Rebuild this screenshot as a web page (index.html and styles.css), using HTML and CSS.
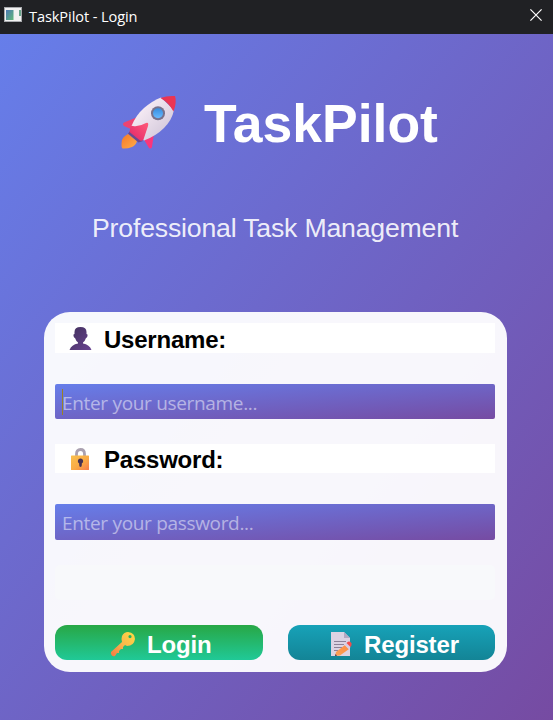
FILE: index.html
```html
<!DOCTYPE html>
<html lang="en">
<head>
<meta charset="utf-8">
<title>TaskPilot - Login</title>
<link rel="stylesheet" href="styles.css">
</head>
<body>
<header class="titlebar">
  <svg class="app-icon" width="18" height="15" viewBox="0 0 18 15">
    <defs><linearGradient id="app" x1="0" y1="0" x2="1" y2="1"><stop offset="0" stop-color="#4d79b5"/><stop offset="1" stop-color="#5fb878"/></linearGradient></defs>
    <rect width="18" height="15" fill="#f2f2f2"/><path d="M0 .5h18M.5 0v15M17.5 0v15M0 14.5h18" stroke="#a8aaad"/>
    <rect x="2" y="3" width="7.5" height="10" fill="url(#app)"/><rect x="15" y="3" width="2" height="6" fill="#69a58c"/>
  </svg>
  <span class="window-title">TaskPilot - Login</span>
  <svg class="close" width="12" height="12" viewBox="0 0 12 12"><path d="M.4.4l11.2 11.2M11.6.4L.4 11.6" stroke="#fff" stroke-width="1.2"/></svg>
</header>
<main class="window">
  <h1 class="brand">
    <svg class="rocket" width="56" height="56" viewBox="0 0 56 56">
      <defs>
        <linearGradient id="body" x1="0" y1="0" x2="1" y2="1"><stop offset="0.25" stop-color="#f5eaf3"/><stop offset="1" stop-color="#c9bfd4"/></linearGradient>
        <linearGradient id="fin" x1="0" y1="0" x2="1" y2="1"><stop offset="0" stop-color="#e9486e"/><stop offset="1" stop-color="#ff327d"/></linearGradient>
        <linearGradient id="cone" x1="1" y1="0" x2="0" y2="1"><stop offset="0" stop-color="#ff5a78"/><stop offset="1" stop-color="#e0246a"/></linearGradient>
        <linearGradient id="flame" x1="0" y1="0" x2="1" y2="1"><stop offset="0" stop-color="#f57829"/><stop offset="1" stop-color="#ffad48"/></linearGradient>
        <linearGradient id="glass" x1="0" y1="0" x2="0" y2="1"><stop offset="0" stop-color="#368ddf"/><stop offset="1" stop-color="#68b9ff"/></linearGradient>
      </defs>
      <path d="M7 39Q1 42 .7 47Q0 52 1.500 53.500Q6 54 11 52Q15 50 16 46Z" fill="url(#flame)"/>
      <path d="M19 21L3 27.500Q1 29 3 31L12 35L22 43L28 53Q30 54.500 31 52L33 38Z" fill="url(#fin)"/>
      <path d="M10.500 31Q15 20 23 13Q32 5.500 40 2.500L53 15Q51 25 43 33Q35 41 23 45.500Z" fill="url(#body)"/>
      <path d="M39.500 3Q46 .5 54 1Q56 7 52.500 16.500Q48 8 39.500 3Z" fill="#ea3452"/>
      <path d="M7 38.500L17.500 47.500L22 46L10 35Z" fill="#68498f"/>
      <path d="M9.500 32Q10 30 12 31Q18 32 25 28Q28 27 27 31L22.500 44.500Q21 46.500 19 45.500L8.500 37Z" fill="url(#cone)"/>
      <circle cx="37" cy="18.300" r="7" fill="#77728d"/><circle cx="37" cy="18.300" r="5" fill="url(#glass)"/>
    </svg>
    <span>TaskPilot</span>
  </h1>
  <p class="tagline">Professional Task Management</p>
  <form class="card">
    <label class="label" for="user">
      <svg class="label-icon" width="24" height="24" viewBox="0 0 24 24">
        <defs><linearGradient id="person" x1="0" y1="0" x2="1" y2="1"><stop offset="0" stop-color="#41305c"/><stop offset="1" stop-color="#694391"/></linearGradient></defs>
        <path d="M6.500 6Q6.500 1 12.500 1T18.500 6V8Q20 8 19.500 10Q19 12 18 12Q17 15 15 16.500V17.500Q21.500 18.500 23.500 24H1.500Q3.500 18.500 10 17.500V16.500Q8 15 7 12Q6 12 5.500 10Q5 8 6.500 8Z" fill="url(#person)"/>
      </svg><span>Username:</span>
    </label>
    <div class="field"><i class="caret"></i><input id="user" class="input" type="text" placeholder="Enter your username..."></div>
    <label class="label label-second" for="pass">
      <svg class="label-icon" width="24" height="24" viewBox="0 0 24 24">
        <defs><linearGradient id="lock" x1="0" y1="0" x2="1" y2="1"><stop offset="0" stop-color="#fac14d"/><stop offset=".55" stop-color="#f9aa45"/><stop offset="1" stop-color="#f77b4a"/></linearGradient></defs>
        <path d="M8.500 12V7Q8.500 2.500 12.500 2.500T16.500 7V12" fill="none" stroke="#aaa1b0" stroke-width="2.800"/>
        <rect x="3" y="8.500" width="18" height="14.500" rx=".6" fill="url(#lock)"/><path d="M12.500 11.500a2.600 2.600 0 0 0-1.300 4.900V18q0 2 1.300 2t1.300-2v-1.600A2.600 2.600 0 0 0 12.500 11.500Z" fill="#453052"/>
      </svg><span>Password:</span>
    </label>
    <div class="field field-second"><input id="pass" class="input" type="password" placeholder="Enter your password..."></div>
    <div class="message"></div>
    <div class="actions">
      <button class="button login" type="button">
        <svg width="26" height="26" viewBox="0 0 26 26">
          <defs><linearGradient id="key" x1="1" y1="0" x2="0" y2="1"><stop offset="0" stop-color="#ffdc43"/><stop offset=".5" stop-color="#f9b84c"/><stop offset="1" stop-color="#f47842"/></linearGradient></defs>
          <path fill-rule="evenodd" d="M12 5Q14 1 18 1Q25 2 25 8Q24 15 17 15L15 14L13 16V18H11L9 20V22L7 22L5 25Q2 26 1 23V21L12 11Q11 8 12 5ZM20 4a1.600 1.600 0 1 0 0 3.200a1.600 1.600 0 0 0 0-3.200Z" fill="url(#key)"/>
        </svg><span>Login</span>
      </button>
      <button class="button register" type="button">
        <svg width="24" height="26" viewBox="0 0 24 26">
          <defs><linearGradient id="pencil" x1="1" y1="0" x2="0" y2="1"><stop offset="0" stop-color="#ff8b3f"/><stop offset="1" stop-color="#f8a45b"/></linearGradient></defs>
          <path d="M2 1H15L21 7V25H2Z" fill="#dcd3e3"/><path d="M15 1V7H21Z" fill="#b5a8c2"/>
          <path d="M5 10.500H17M5 13.500H15M5 16.500H13M5 19.500H9" stroke="#8d8197"/>
          <path d="M16 14L20 18L11 24.500L6 25L7 21Z" fill="url(#pencil)"/><path d="M15.500 14L17.500 12L21.500 16L19.500 18Z" fill="#d9cde2"/><path d="M17.500 12L19 10.800Q21.500 10 22.500 12.500Q23 14 21.500 16Z" fill="#f34c4c"/><path d="M6 25L6.500 23L8 24.700Z" fill="#46305b"/>
        </svg><span>Register</span>
      </button>
    </div>
  </form>
</main>
</body>
</html>
```
FILE: styles.css
```css
* { box-sizing: border-box; }
body {
  margin: 0;
  height: 720px;
  display: flex;
  flex-direction: column;
  overflow: hidden;
  font-family: "Liberation Sans", Arial, sans-serif;
}
.titlebar {
  height: 34px;
  flex: none;
  display: flex;
  align-items: flex-start;
  padding: 7px 11px 0 4px;
  background: #202124;
  color: #fff;
}
.app-icon { flex: none; }
.window-title {
  margin-left: 7px;
  font: 14.6px/18px "Open Sans", "Noto Sans", sans-serif;
  letter-spacing: -0.1px;
}
.close { margin: 2px 0 0 auto; }
.window {
  flex: 1;
  padding: 54px 46.500px 0 44px;
  background: linear-gradient(to bottom right, #667eea, #764ba2);
}
.brand {
  display: flex;
  align-items: center;
  height: 70px;
  margin: 0;
  padding-left: 77px;
  gap: 27px;
  color: #fff;
  font-size: 53.500px;
  line-height: 70px;
}
.brand span { padding-top: 2px; }
.rocket { margin-top: 0; }
.tagline {
  height: 40px;
  margin: 50px 0 0 48px;
  color: rgba(255, 255, 255, 0.9);
  font-size: 26.670px;
  letter-spacing: -0.19px;
  line-height: 40px;
  white-space: nowrap;
}
.card {
  height: 359.500px;
  margin-top: 64px;
  padding: 11px 11.500px 0 11px;
  border-radius: 26px;
  background: rgba(255, 255, 255, 0.95);
}
.label {
  display: flex;
  height: 30px;
  padding-left: 13px;
  gap: 12px;
  background: #fff;
  color: #000;
  font-size: 24px;
  letter-spacing: -0.22px;
  font-weight: bold;
  line-height: 34px;
}
.label-icon { margin-top: 3px; }
.label-second { margin-top: 25px; height: 29px; line-height: 32px; }
.field {
  position: relative;
  height: 35px;
  margin-top: 31px;
  border-radius: 2px;
  background: linear-gradient(to bottom right, #667eea, #764ba2);
}
.field-second { height: 36px; }
.input {
  display: block;
  width: 100%;
  height: 100%;
  padding: 3px 7px 0;
  border: 0;
  outline: 0;
  background: transparent;
  color: #fff;
  font: 19px/26px "Open Sans", "Noto Sans", sans-serif;
  letter-spacing: -0.32px;
}
.field-second .input { padding-top: 2px; }
.input::placeholder { color: rgba(255, 255, 255, 0.5); opacity: 1; }
.caret {
  position: absolute;
  left: 7px;
  top: 5px;
  width: 1px;
  height: 26px;
  background: #998127;
}
.message {
  height: 35px;
  margin-top: 25px;
  border-radius: 5px;
  background: #f8f9fb;
}
.actions {
  display: grid;
  grid-template-columns: 208px 207px;
  justify-content: space-between;
  margin-top: 25px;
}
.button {
  display: flex;
  height: 35px;
  padding: 0;
  border: 0;
  border-radius: 12px;
  color: #fff;
  font: bold 24px/39px "Liberation Sans", Arial, sans-serif;
  letter-spacing: -0.15px;
}
.button svg { margin-top: 6px; }
.login {
  padding-left: 55px;
  gap: 11px;
  background: linear-gradient(#28a745, #20c997);
}
.register {
  padding-left: 41px;
  gap: 11px;
  background: linear-gradient(#17a2b8, #138496);
}
```
